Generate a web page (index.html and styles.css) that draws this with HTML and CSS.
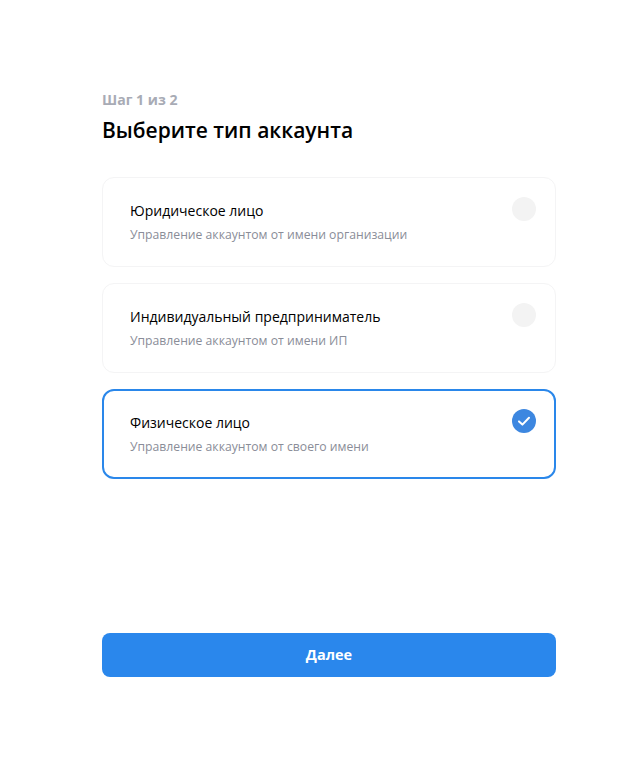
FILE: index.html
```html
<!DOCTYPE html>
<html lang="ru">
<head>
<meta charset="utf-8">
<title>Выберите тип аккаунта</title>
<link rel="stylesheet" href="styles.css">
</head>
<body>
<main class="page">
  <p class="step">Шаг 1 из 2</p>
  <h1 class="title">Выберите тип аккаунта</h1>
  <div class="options">
    <div class="card">
      <div class="card-text">
        <div class="card-title">Юридическое лицо</div>
        <div class="card-desc">Управление аккаунтом от имени организации</div>
      </div>
      <span class="radio"></span>
    </div>
    <div class="card">
      <div class="card-text">
        <div class="card-title">Индивидуальный предприниматель</div>
        <div class="card-desc">Управление аккаунтом от имени ИП</div>
      </div>
      <span class="radio"></span>
    </div>
    <div class="card card-selected">
      <div class="card-text">
        <div class="card-title">Физическое лицо</div>
        <div class="card-desc">Управление аккаунтом от своего имени</div>
      </div>
      <span class="radio radio-on">
        <svg class="check" viewBox="0 0 24 24" width="24" height="24" aria-hidden="true"><path d="M7 12.4l3.4 3.2L17 8.8" fill="none" stroke="#fff" stroke-width="2" stroke-linecap="round" stroke-linejoin="round"/></svg>
      </span>
    </div>
  </div>
  <button class="next" type="button">Далее</button>
</main>
</body>
</html>
```
FILE: styles.css
```css
* { box-sizing: border-box; }
html, body { margin: 0; padding: 0; background: #fff; }
body { font-family: "Open Sans", "Noto Sans", sans-serif; color: #000; }
.page { width: 454px; height: 770px; margin-left: 102px; padding-top: 90px; display: flex; flex-direction: column; }
.step { margin: 0; font-size: 14.1px; line-height: 20px; font-weight: 700; color: #a8abb5; }
.title { margin: 6px 0 0; font-size: 21px; line-height: 28px; font-weight: 600; color: #000; }
.options { margin-top: 33px; display: flex; flex-direction: column; gap: 16px; }
.card { height: 90px; border: 1px solid #f4f4f5; border-radius: 12px; padding: 19px 19px 0 27px; display: flex; justify-content: space-between; align-items: flex-start; }
.card-selected { border: 2px solid #2a87ea; padding: 18px 18px 0 26px; }
.card-title { font-size: 14px; line-height: 20px; margin-top: 4px; }
.card-desc { font-size: 12.2px; line-height: 16px; margin-top: 6px; color: #8a8d98; }
.radio { width: 24px; height: 24px; border-radius: 50%; background: #f3f3f3; flex: none; }
.radio-on { background: #3d87e0; }
.check { display: block; }
.next { margin-top: 154px; height: 44px; width: 100%; border: 0; border-radius: 8px; background: #2a87ec; color: #fff; font: 700 14.5px/20px "Open Sans", "Noto Sans", sans-serif; }
```
